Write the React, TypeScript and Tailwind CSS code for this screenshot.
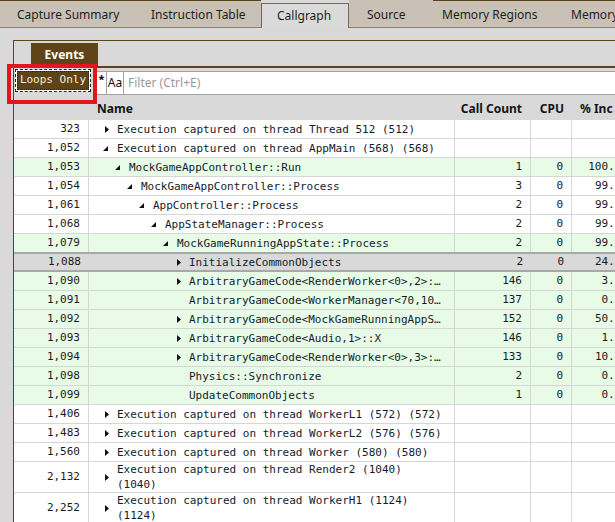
import React from 'react';

type Row = {
  id: string;
  level: number;
  expander: 'open' | 'closed' | 'none';
  name: string[];
  calls?: string;
  cpu?: string;
  inc?: string;
  tone: 'white' | 'green' | 'selected';
};

const rows: Row[] = [
  { id: '323', level: 0, expander: 'closed', name: ['Execution captured on thread Thread 512 (512)'], tone: 'white' },
  { id: '1,052', level: 0, expander: 'open', name: ['Execution captured on thread AppMain (568) (568)'], tone: 'white' },
  { id: '1,053', level: 1, expander: 'open', name: ['MockGameAppController::Run'], calls: '1', cpu: '0', inc: '100.00', tone: 'green' },
  { id: '1,054', level: 2, expander: 'open', name: ['MockGameAppController::Process'], calls: '3', cpu: '0', inc: '99.98', tone: 'white' },
  { id: '1,061', level: 3, expander: 'open', name: ['AppController::Process'], calls: '2', cpu: '0', inc: '99.97', tone: 'white' },
  { id: '1,068', level: 4, expander: 'open', name: ['AppStateManager::Process'], calls: '2', cpu: '0', inc: '99.96', tone: 'white' },
  { id: '1,079', level: 5, expander: 'open', name: ['MockGameRunningAppState::Process'], calls: '2', cpu: '0', inc: '99.95', tone: 'green' },
  { id: '1,088', level: 6, expander: 'closed', name: ['InitializeCommonObjects'], calls: '2', cpu: '0', inc: '24.31', tone: 'selected' },
  { id: '1,090', level: 6, expander: 'closed', name: ['ArbitraryGameCode<RenderWorker<0>,2>:…'], calls: '146', cpu: '0', inc: '3.12', tone: 'green' },
  { id: '1,091', level: 6, expander: 'none', name: ['ArbitraryGameCode<WorkerManager<70,10…'], calls: '137', cpu: '0', inc: '0.84', tone: 'green' },
  { id: '1,092', level: 6, expander: 'closed', name: ['ArbitraryGameCode<MockGameRunningAppS…'], calls: '152', cpu: '0', inc: '50.27', tone: 'green' },
  { id: '1,093', level: 6, expander: 'closed', name: ['ArbitraryGameCode<Audio,1>::X'], calls: '146', cpu: '0', inc: '1.05', tone: 'green' },
  { id: '1,094', level: 6, expander: 'closed', name: ['ArbitraryGameCode<RenderWorker<0>,3>:…'], calls: '133', cpu: '0', inc: '10.44', tone: 'green' },
  { id: '1,098', level: 6, expander: 'none', name: ['Physics::Synchronize'], calls: '2', cpu: '0', inc: '0.01', tone: 'green' },
  { id: '1,099', level: 6, expander: 'none', name: ['UpdateCommonObjects'], calls: '1', cpu: '0', inc: '0.00', tone: 'green' },
  { id: '1,406', level: 0, expander: 'closed', name: ['Execution captured on thread WorkerL1 (572) (572)'], tone: 'white' },
  { id: '1,483', level: 0, expander: 'closed', name: ['Execution captured on thread WorkerL2 (576) (576)'], tone: 'white' },
  { id: '1,560', level: 0, expander: 'closed', name: ['Execution captured on thread Worker (580) (580)'], tone: 'white' },
  { id: '2,132', level: 0, expander: 'closed', name: ['Execution captured on thread Render2 (1040)', '(1040)'], tone: 'white' },
  { id: '2,252', level: 0, expander: 'closed', name: ['Execution captured on thread WorkerH1 (1124)', '(1124)'], tone: 'white' },
];

const indents = ['pl-[12px]', 'pl-[24px]', 'pl-[36px]', 'pl-[48px]', 'pl-[60px]', 'pl-[72px]', 'pl-[84px]'];

const Expander = ({ kind }: { kind: Row['expander'] }) => {
  if (kind === 'closed') {
    return (
      <svg width="4" height="7" viewBox="0 0 4 7" className="ml-[4px]">
        <path d="M0 0L4 3.5L0 7Z" fill="#111" />
      </svg>
    );
  }
  if (kind === 'open') {
    return (
      <svg width="5" height="5" viewBox="0 0 5 5" className="ml-[2px]">
        <path d="M5 0L5 5L0 5Z" fill="#111" />
      </svg>
    );
  }
  return null;
};

const tabs = [
  { label: 'Capture Summary', cls: 'w-[134px] pl-[17px] border-t border-[#5c4219]' },
  { label: 'Instruction Table', cls: 'w-[127px] pl-[17px] border-t border-[#5c4219]' },
  { label: 'Source', cls: 'w-[84px] pl-[18px]' },
  { label: 'Memory Regions', cls: 'w-[117px] pl-[9px] border-t border-[#5c4219]' },
  { label: 'Memory', cls: 'w-[100px] pl-[21px] border-t border-[#5c4219]' },
];

const TabItem = ({ label, cls }: { label: string; cls: string }) => (
  <div className={`shrink-0 h-[28px] flex items-center pt-[2px] bg-[#c9c1b5] border-b border-b-[#8d8372] text-[#1e1e1e] ${cls}`}>
    {label}
  </div>
);

const CallRow = ({ row }: { row: Row }) => {
  const tall = row.name.length > 1;
  const bg = row.tone === 'green' ? 'bg-[#e7fbe7]' : row.tone === 'selected' ? 'bg-[#d9d9d9]' : 'bg-white';
  const selected = row.tone === 'selected';
  const rowCls = selected
    ? 'h-[20px] -mt-px border-y-2 border-[#a8a8a8]'
    : tall
      ? 'h-[31px] border-b border-[#d6d6d6]'
      : 'h-[19px] border-b border-[#d6d6d6]';
  const line = selected ? '' : 'border-r border-[#d6d6d6]';

  return (
    <div className={`flex shrink-0 ${rowCls} ${bg}`}>
      <div className={`w-[75px] shrink-0 flex items-center justify-end pr-[8px] ${line}`}>{row.id}</div>
      <div className={`w-[366px] shrink-0 flex items-center ${indents[row.level]} ${line}`}>
        <span className="w-[16px] shrink-0 flex items-center">
          <Expander kind={row.expander} />
        </span>
        <div className="leading-[15px] whitespace-nowrap text-[#141b2b]">
          {row.name.map((n, i) => (
            <div key={i}>{n}</div>
          ))}
        </div>
      </div>
      <div className={`w-[76px] shrink-0 flex items-center justify-end pr-[8px] ${line}`}>{row.calls}</div>
      <div className={`w-[41px] shrink-0 flex items-center justify-end pr-[8px] ${line}`}>{row.cpu}</div>
      <div className="w-[80px] shrink-0 flex items-center justify-end pr-[24px]">{row.inc}</div>
    </div>
  );
};

export default function App() {
  return (
    <div className="relative w-[615px] h-[522px] overflow-hidden bg-[#d9d9d9] font-['Noto_Sans'] text-[12px]">
      {/* tab strip */}
      <div className="flex h-[28px]">
        <TabItem {...tabs[0]} />
        <TabItem {...tabs[1]} />
        <div className="shrink-0 w-[88px] h-[25px] mt-[3px] flex items-center pl-[15px] bg-[#dadada] border-x border-t border-[#74675a] text-[#1e1e1e]">
          Callgraph
        </div>
        <TabItem {...tabs[2]} />
        <TabItem {...tabs[3]} />
        <TabItem {...tabs[4]} />
      </div>

      {/* panel */}
      <div className="mt-[12px] ml-[13px] border-l border-t border-[#5c4219] flex flex-col h-[482px]">
        <div className="h-[25px] flex shrink-0">
          <div className="ml-[17px] mt-[2px] w-[67px] h-[23px] bg-[#5f4419] text-white font-bold flex items-center justify-center">
            Events
          </div>
        </div>
        <div className="h-[2px] bg-[#5c4219] shrink-0" />

        {/* filter row */}
        <div className="h-[27px] flex shrink-0">
          <div className="ml-px mt-px h-[23px] w-[76px] border border-dashed border-[#222] bg-white p-px">
            <div className="h-full border border-dotted border-[#222] bg-[#5e4318] text-[#f6eed4] font-['DejaVu_Sans_Mono'] text-[11px] flex items-center justify-center">
              Loops Only
            </div>
          </div>
          <div className="ml-[6px] mt-[3px] h-[24px] flex-1 flex bg-white border-y border-[#a3a3a3]">
            <span className="w-[9px] text-center font-bold text-[11px] leading-[12px] pt-px">*</span>
            <span className="w-[18px] border-x border-[#a3a3a3] flex items-center justify-center text-[#111]">Aa</span>
            <span className="pl-[4px] flex items-center text-[#9a9a9a]">Filter (Ctrl+E)</span>
          </div>
        </div>

        {/* column headers */}
        <div className="h-[25px] flex items-center pt-[2px] font-bold text-[#141414] shrink-0">
          <div className="w-[75px] shrink-0" />
          <div className="w-[366px] shrink-0 pl-[8px]">Name</div>
          <div className="w-[76px] shrink-0 text-right pr-[9px]">Call Count</div>
          <div className="w-[41px] shrink-0 text-right pr-[8px]">CPU</div>
          <div className="w-[80px] shrink-0 pl-[8px] flex items-center">
            % Inc
            <span className="ml-[2px] w-[3px] h-[8px] bg-[#e6a640]" />
          </div>
        </div>

        {/* rows */}
        <div className="flex-1 bg-white flex flex-col font-['DejaVu_Sans_Mono'] text-[11px] text-[#1a1a1a] w-[638px]">
          {rows.map((r) => (
            <CallRow key={r.id} row={r} />
          ))}
        </div>
      </div>

      {/* annotation highlight */}
      <div className="absolute left-[7px] top-[64px] w-[90px] h-[40px] border-4 border-[#e3161f]" />
    </div>
  );
}
